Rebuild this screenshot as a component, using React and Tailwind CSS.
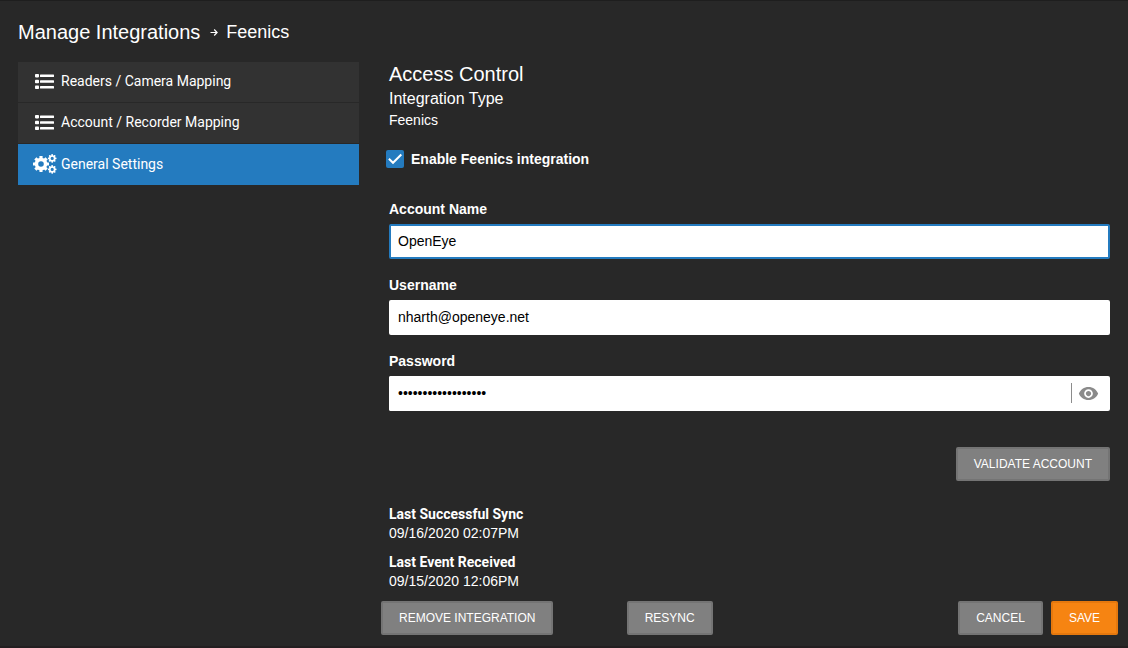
import { useState } from "react";
import { MdVisibility } from "react-icons/md";

const sync = [
  { title: "Last Successful Sync", time: "09/16/2020 02:07PM" },
  { title: "Last Event Received", time: "09/15/2020 12:06PM" },
];

function ListIcon() {
  return (
    <svg
      className="ml-[2px]"
      width="19"
      height="15"
      viewBox="0 0 19 15"
      fill="currentColor"
      aria-hidden="true"
    >
      <rect x="0" y="0" width="4" height="3.4" rx="0.8" />
      <rect x="0" y="5.8" width="4" height="3.4" rx="0.8" />
      <rect x="0" y="11.6" width="4" height="3.4" rx="0.8" />
      <rect x="5" y="0.4" width="14" height="2.6" rx="0.5" />
      <rect x="5" y="6.2" width="14" height="2.6" rx="0.5" />
      <rect x="5" y="12" width="14" height="2.6" rx="0.5" />
    </svg>
  );
}

// body, hole and outer are radii
function Gear({ cx, cy, body, hole, outer, tooth }) {
  return (
    <g transform={`translate(${cx} ${cy})`}>
      <circle
        r={(body + hole) / 2}
        fill="none"
        stroke="currentColor"
        strokeWidth={body - hole}
      />
      {[0, 45, 90, 135, 180, 225, 270, 315].map((angle) => (
        <rect
          key={angle}
          x={-tooth / 2}
          y={-outer}
          width={tooth}
          height={outer - body + 1}
          rx="0.4"
          fill="currentColor"
          transform={`rotate(${angle})`}
        />
      ))}
    </g>
  );
}

function CogsIcon() {
  return (
    <svg width="24" height="20" viewBox="0 0 24 20" aria-hidden="true">
      <Gear cx={8} cy={10} body={6.3} hole={2.8} outer={8} tooth={3.2} />
      <Gear cx={19.2} cy={4.4} body={3.2} hole={1.6} outer={4.3} tooth={1.6} />
      <Gear cx={19.2} cy={15.4} body={3.2} hole={1.6} outer={4.3} tooth={1.6} />
    </svg>
  );
}

function ArrowIcon() {
  return (
    <svg
      width="8"
      height="8"
      viewBox="0 0 8 8"
      fill="none"
      stroke="currentColor"
      strokeWidth="1.2"
      aria-hidden="true"
    >
      <path d="M0.5 4.5H7M4.2 1.5L7.1 4.5L4.2 7.5" />
    </svg>
  );
}

function NavItem({ icon, active, children }) {
  return (
    <li>
      <a
        href="#"
        aria-current={active ? "page" : undefined}
        className={`flex items-center pl-[14px] font-[Roboto,sans-serif] text-sm ${
          active ? "h-[41px] bg-[#247bbf] pb-px" : "h-10 bg-[#323232] pb-px"
        }`}
      >
        <span className="flex w-[29px] shrink-0 pl-px">{icon}</span>
        <span className="pb-px">{children}</span>
      </a>
    </li>
  );
}

function Field({ id, label, children }) {
  return (
    <div>
      <label htmlFor={id} className="mb-[6px] block leading-[18px] font-bold">
        {label}
      </label>
      {children}
    </div>
  );
}

function Button({ primary, children }) {
  return (
    <button
      type="button"
      className={`h-[34px] rounded-[2px] border-2 px-4 pt-px text-[12px] whitespace-nowrap uppercase ${
        primary
          ? "border-[#e5780e] bg-[#f68412]"
          : "border-[#747474] bg-[#808080]"
      }`}
    >
      {children}
    </button>
  );
}

const inputClass =
  "block h-[35px] w-full rounded-[2px] border-2 border-white bg-white px-[7px] pb-px text-sm text-black outline-none focus:border-[#247bbf]";

export default function App() {
  const [enabled, setEnabled] = useState(true);
  const [account, setAccount] = useState("OpenEye");
  const [username, setUsername] = useState("nharth@openeye.net");
  const [password, setPassword] = useState("integration-feenic");
  const [showPassword, setShowPassword] = useState(false);

  return (
    <div className="min-h-screen border-t border-b-2 border-t-[#1e1e1e] border-b-[#231f21] bg-[#282828] pt-[15px] pr-[10px] pb-[11px] pl-[18px] font-['Liberation_Sans',Arial,sans-serif] text-sm text-white">
      <header className="mb-[14px] flex h-8 items-center">
        <h1 className="text-xl">Manage Integrations</h1>
        <span className="mr-2 ml-[10px]">
          <ArrowIcon />
        </span>
        <h2 className="text-lg">Feenics</h2>
      </header>

      <div className="flex gap-[22px]">
        <nav className="w-[341px] shrink-0">
          <ul className="flex flex-col gap-px">
            <NavItem icon={<ListIcon />}>Readers / Camera Mapping</NavItem>
            <NavItem icon={<ListIcon />}>Account / Recorder Mapping</NavItem>
            <NavItem icon={<CogsIcon />} active>
              General Settings
            </NavItem>
          </ul>
        </nav>

        <main className="min-w-0 flex-1">
          <div className="px-2">
            <h3 className="text-xl leading-6">Access Control</h3>
            <h4 className="text-base leading-[26px]">Integration Type</h4>
            <p className="leading-4">Feenics</p>
          </div>

          <label className="mt-[22px] flex h-[18px] items-center gap-[7px] px-[5px] font-bold">
            <span className="relative flex">
              <input
                type="checkbox"
                checked={enabled}
                onChange={(e) => setEnabled(e.target.checked)}
                className="size-[18px] appearance-none rounded-[2px] bg-white checked:bg-[#247bbf]"
              />
              {enabled && (
                <svg
                  className="pointer-events-none absolute inset-0"
                  width="18"
                  height="18"
                  viewBox="0 0 18 18"
                  fill="none"
                  stroke="white"
                  strokeWidth="2"
                  aria-hidden="true"
                >
                  <path d="M2.9 8.8L7 12.8L15.3 4.5" />
                </svg>
              )}
            </span>
            Enable Feenics integration
          </label>

          <form className="mt-8 flex flex-col gap-[17px] px-2">
            <Field id="account" label="Account Name">
              <input
                id="account"
                type="text"
                autoComplete="off"
                value={account}
                onChange={(e) => setAccount(e.target.value)}
                className={`${inputClass} border-[#247bbf]!`}
              />
            </Field>

            <Field id="username" label="Username">
              <input
                id="username"
                type="text"
                autoComplete="off"
                value={username}
                onChange={(e) => setUsername(e.target.value)}
                className={inputClass}
              />
            </Field>

            <Field id="password" label="Password">
              <div className="flex items-center rounded-[2px] bg-white">
                <input
                  id="password"
                  type={showPassword ? "text" : "password"}
                  autoComplete="off"
                  value={password}
                  onChange={(e) => setPassword(e.target.value)}
                  className={inputClass}
                />
                <button
                  type="button"
                  aria-label="Show password"
                  onClick={() => setShowPassword(!showPassword)}
                  className="mr-[11px] mb-px flex h-5 shrink-0 items-center border-l border-[#8c8c8c] pl-[6px] text-[#8a8a8a]"
                >
                  <MdVisibility size={21} />
                </button>
              </div>
            </Field>
          </form>

          <div className="mt-9 flex justify-end px-2">
            <Button>Validate Account</Button>
          </div>

          <dl className="mt-6 flex flex-col gap-[10px] px-2 leading-[19px]">
            {sync.map((item) => (
              <div key={item.title}>
                <dt className="font-[Roboto,sans-serif] font-bold">{item.title}</dt>
                <dd>{item.time}</dd>
              </div>
            ))}
          </dl>

          <div className="mt-[10px] grid grid-cols-3">
            <div>
              <Button>Remove Integration</Button>
            </div>
            <div>
              <Button>Resync</Button>
            </div>
            <div className="flex justify-end gap-2">
              <Button>Cancel</Button>
              <Button primary>Save</Button>
            </div>
          </div>
        </main>
      </div>
    </div>
  );
}
